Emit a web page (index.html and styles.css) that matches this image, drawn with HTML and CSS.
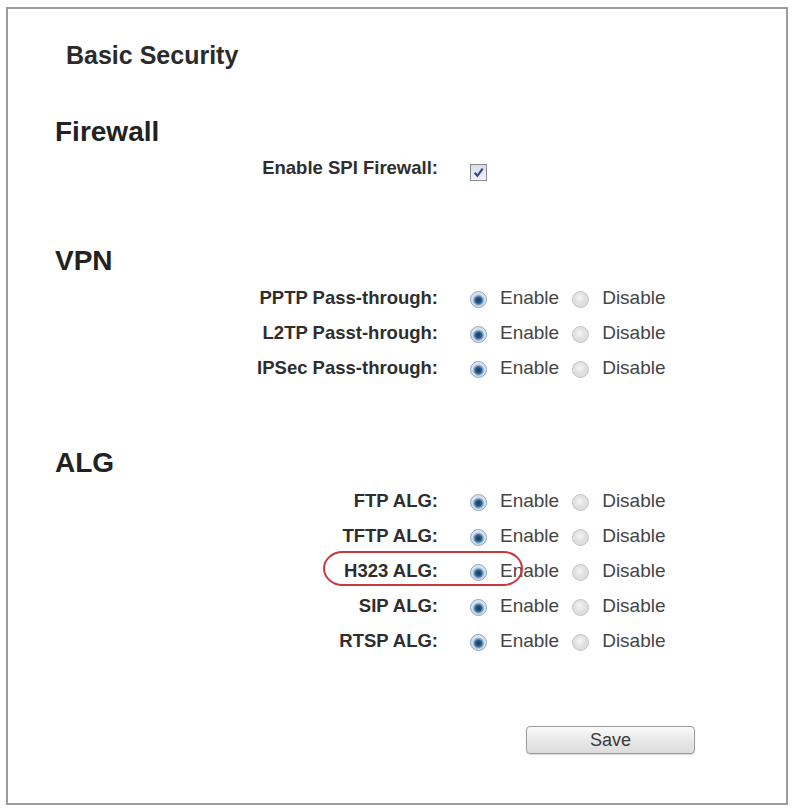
FILE: index.html
```html
<!DOCTYPE html>
<html>
<head>
<meta charset="utf-8">
<title>Basic Security</title>
<link rel="stylesheet" href="styles.css">
</head>
<body>
<div class="panel">
	<h1 class="title">Basic Security</h1>

	<div class="section sec-firewall">
		<h2>Firewall</h2>
		<div class="rows">
			<div class="row">
				<span class="label">Enable SPI Firewall:</span>
				<span class="check"><svg width="11" height="11" viewBox="0 0 10 10"><path d="M1.5 5.2 L4 8 L8.8 1.5" fill="none" stroke="#34488a" stroke-width="2"/></svg></span>
			</div>
		</div>
	</div>

	<div class="section sec-vpn">
		<h2>VPN</h2>
		<div class="rows">
			<div class="row">
				<span class="label">PPTP Pass-through:</span>
				<span class="radio on"></span><span class="opt">Enable</span>
				<span class="radio"></span><span class="opt">Disable</span>
			</div>
			<div class="row">
				<span class="label">L2TP Passt-hrough:</span>
				<span class="radio on"></span><span class="opt">Enable</span>
				<span class="radio"></span><span class="opt">Disable</span>
			</div>
			<div class="row">
				<span class="label">IPSec Pass-through:</span>
				<span class="radio on"></span><span class="opt">Enable</span>
				<span class="radio"></span><span class="opt">Disable</span>
			</div>
		</div>
	</div>

	<div class="section sec-alg">
		<h2>ALG</h2>
		<div class="rows">
			<div class="row">
				<span class="label">FTP ALG:</span>
				<span class="radio on"></span><span class="opt">Enable</span>
				<span class="radio"></span><span class="opt">Disable</span>
			</div>
			<div class="row">
				<span class="label">TFTP ALG:</span>
				<span class="radio on"></span><span class="opt">Enable</span>
				<span class="radio"></span><span class="opt">Disable</span>
			</div>
			<div class="row marked">
				<span class="label">H323 ALG:</span>
				<span class="radio on"></span><span class="opt">Enable</span>
				<span class="radio"></span><span class="opt">Disable</span>
				<span class="oval"></span>
			</div>
			<div class="row">
				<span class="label">SIP ALG:</span>
				<span class="radio on"></span><span class="opt">Enable</span>
				<span class="radio"></span><span class="opt">Disable</span>
			</div>
			<div class="row">
				<span class="label">RTSP ALG:</span>
				<span class="radio on"></span><span class="opt">Enable</span>
				<span class="radio"></span><span class="opt">Disable</span>
			</div>
		</div>
	</div>

	<div class="actions">
		<button type="button" class="btn">Save</button>
	</div>
</div>
</body>
</html>
```

FILE: styles.css
```css
html,body{margin:0; padding:0; background:#fff;}
body{font-family:"Liberation Sans", Arial, sans-serif; color:#333;}

.panel{box-sizing:border-box; width:782px; height:798px; margin:7px 0 0 6px; padding-top:31px; border:2px solid #9c9c9c; background:#fff;}

.title{margin:0 0 0 58px; font-size:25px; line-height:30px; font-weight:bold; color:#2b2b2b;}

.section h2{margin:0 0 0 47px; font-size:28px; line-height:32px; font-weight:bold; color:#222;}
.sec-firewall{margin-top:46px;}
.sec-firewall .rows{margin-top:2px;}
.sec-vpn{margin-top:60px;}
.sec-vpn .rows{margin-top:3px;}
.sec-alg{margin-top:62px;}
.sec-alg .rows{margin-top:4px;}

.row{display:flex; align-items:center; height:35px; line-height:35px;}
.row.marked{position:relative;}
.label{width:430px; text-align:right; font-size:18.5px; font-weight:bold; color:#2e2e2e;}
.opt{font-size:19px; color:#454545; margin-left:13px; margin-right:13px;}

.check{display:flex; align-items:center; justify-content:center; box-sizing:border-box; width:17px; height:17px; margin:9px 0 0 32px; border:1px solid #8a8b8e; background:linear-gradient(#d6dcea, #f1f3f9);}

.radio{box-sizing:border-box; width:17px; height:17px; margin-top:4px; border-radius:50%;}
.radio.on{margin-left:32px; border:1px solid #8ea4bc; background:radial-gradient(circle at 50% 55%, #123a60 0, #2a5c8b 3px, #7aa1c4 4.5px, #d3e0ec 6px, #e8eef5 100%);}
.radio:not(.on){border:1px solid #c4c4c4; background:radial-gradient(circle at 45% 40%, #f6f6f6 0, #e2e2e2 5px, #d6d6d6 100%);}

.oval{position:absolute; left:315px; top:-2px; width:200px; height:35px; box-sizing:border-box; border:2px solid #c6393f; border-radius:20px / 18px;}

.actions{margin:68px 0 0 518px;}
.btn{box-sizing:border-box; width:169px; height:28px; padding:0; border:1px solid #9a9a9a; border-radius:4px; background:linear-gradient(#fafafa, #e9e9e9 50%, #dcdcdc); font-family:"Liberation Sans", Arial, sans-serif; font-size:18px; color:#3a3a3a; box-shadow:0 1px 1px rgba(0,0,0,0.15);}
```
